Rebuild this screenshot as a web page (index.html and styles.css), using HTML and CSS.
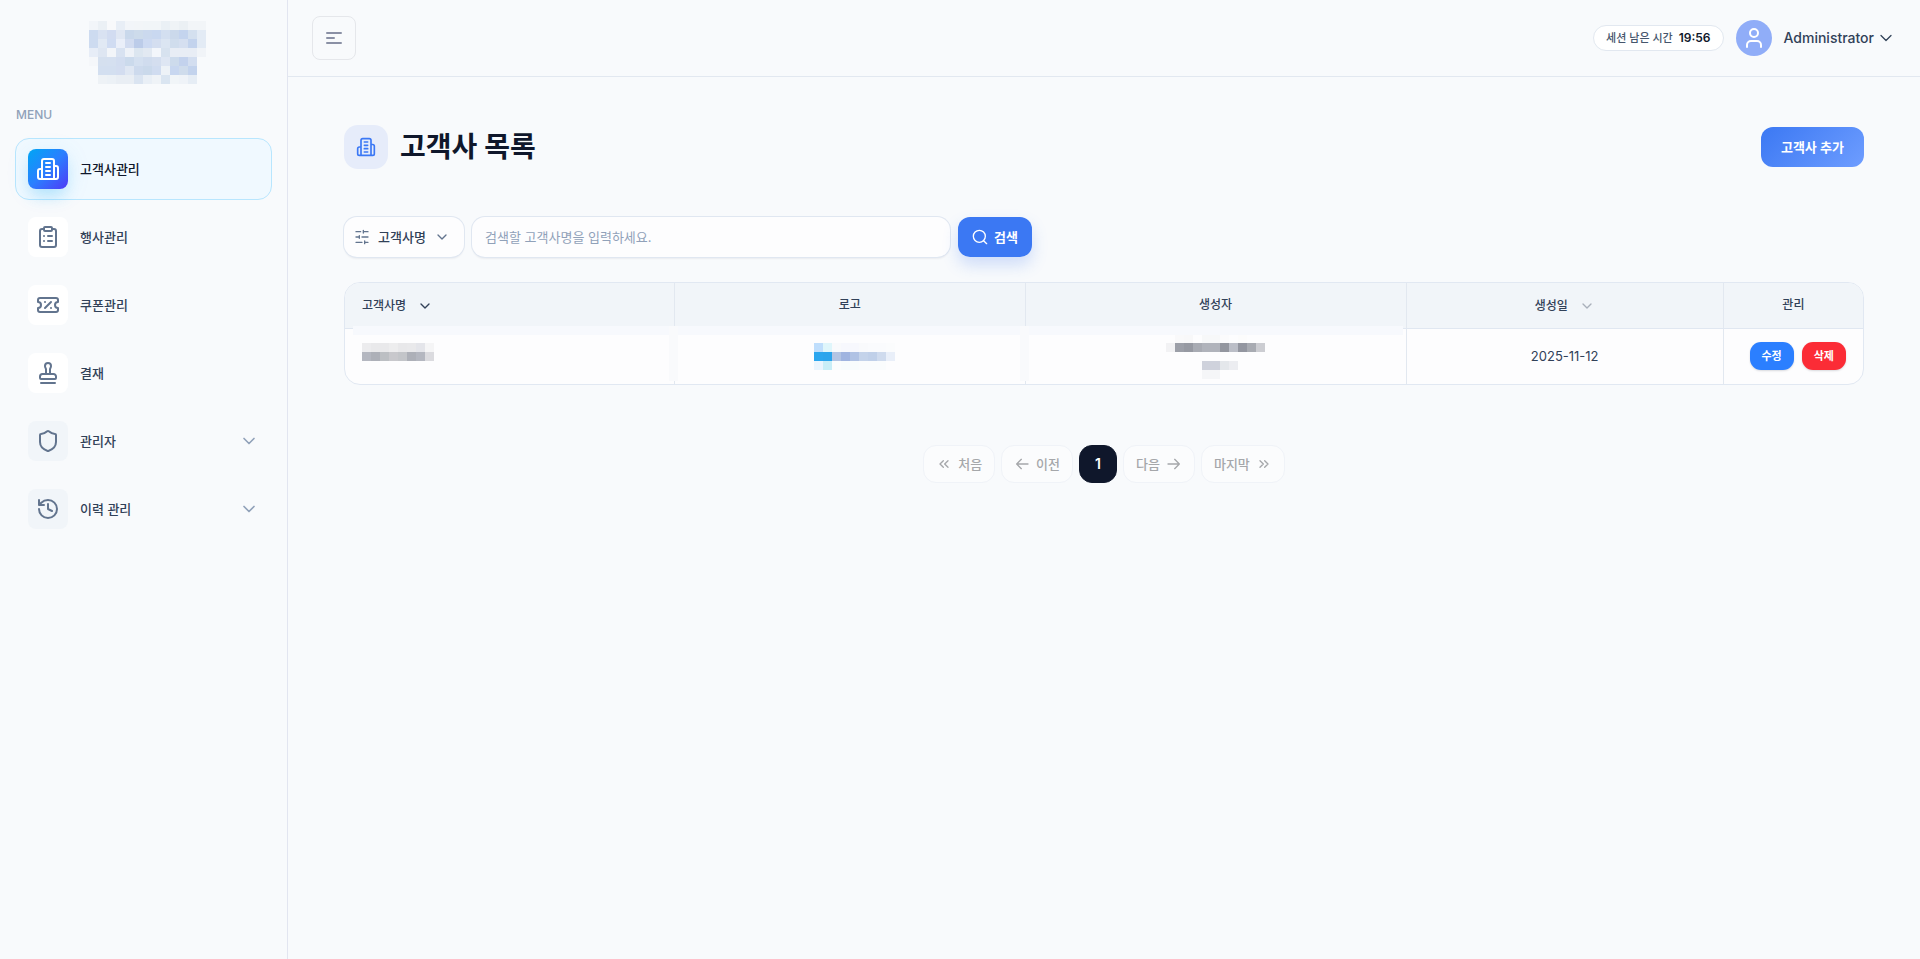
FILE: index.html
```html
<!DOCTYPE html>
<html lang="ko">
  <head>
    <meta charset="UTF-8">
    <meta name="viewport" content="width=device-width, initial-scale=1">
    <title>고객사 목록</title>
    <link rel="stylesheet" href="styles.css">
  </head>
  <body>
    <svg class="sprite" aria-hidden="true">
      <symbol id="building" viewBox="0 0 24 24"><path d="M6 22V4a2 2 0 0 1 2-2h8a2 2 0 0 1 2 2v18Z M6 12H4a2 2 0 0 0-2 2v6a2 2 0 0 0 2 2h2 M18 9h2a2 2 0 0 1 2 2v9a2 2 0 0 1-2 2h-2 M10 6h4 M10 10h4 M10 14h4 M10 18h4"/></symbol>
      <symbol id="chevron" viewBox="0 0 24 24"><path d="m6 9 6 6 6-6"/></symbol>
    </svg>
    <aside class="sidebar">
      <a class="logo" href="#" aria-label="홈"><svg class="mosaic" data-mosaic="logo"></svg></a>
      <h2 class="menu-title">MENU</h2>
      <nav class="menu">
        <a class="menu-item active" href="#">
          <span class="menu-icon"><svg class="icon"><use href="#building"/></svg></span>
          고객사관리
        </a>
        <a class="menu-item" href="#">
          <span class="menu-icon"><svg class="icon" viewBox="0 0 24 24"><rect x="8" y="2" width="8" height="4" rx="1"/><path d="M16 4h2a2 2 0 0 1 2 2v14a2 2 0 0 1-2 2H6a2 2 0 0 1-2-2V6a2 2 0 0 1 2-2h2 M12 11h4 M12 16h4 M8 11h.01 M8 16h.01"/></svg></span>
          행사관리
        </a>
        <a class="menu-item" href="#">
          <span class="menu-icon"><svg class="icon" viewBox="0 0 24 24"><path d="M2 9a3 3 0 1 1 0 6v2a2 2 0 0 0 2 2h16a2 2 0 0 0 2-2v-2a3 3 0 1 1 0-6V7a2 2 0 0 0-2-2H4a2 2 0 0 0-2 2Z M9 9h.01 M15 9l-6 6 M15 15h.01"/></svg></span>
          쿠폰관리
        </a>
        <a class="menu-item" href="#">
          <span class="menu-icon"><svg class="icon" viewBox="0 0 24 24"><path d="M5 22h14 M19.27 13.73A2.5 2.5 0 0 0 17.5 13h-11A2.5 2.5 0 0 0 4 15.500V17a1 1 0 0 0 1 1h14a1 1 0 0 0 1-1v-1.500c0-.66-.26-1.300-.73-1.770Z M14 13V8.500C14 7 15 7 15 5a3 3 0 0 0-3-3c-1.660 0-3 1-3 3s1 2 1 3.500V13"/></svg></span>
          결재
        </a>
        <button class="menu-item group" type="button" aria-expanded="false">
          <span class="menu-icon"><svg class="icon" viewBox="0 0 24 24"><path d="M20 13c0 5-3.500 7.500-7.660 8.950a1 1 0 0 1-.67-.01C7.500 20.500 4 18 4 13V6a1 1 0 0 1 1-1c2 0 4.500-1.200 6.240-2.720a1.170 1.170 0 0 1 1.520 0C14.510 3.810 17 5 19 5a1 1 0 0 1 1 1z"/></svg></span>
          관리자
          <svg class="icon arrow"><use href="#chevron"/></svg>
        </button>
        <button class="menu-item group" type="button" aria-expanded="false">
          <span class="menu-icon"><svg class="icon" viewBox="0 0 24 24"><path d="M3 12a9 9 0 1 0 9-9 9.750 9.750 0 0 0-6.740 2.740L3 8 M3 3v5h5 M12 7v5l4 2"/></svg></span>
          이력 관리
          <svg class="icon arrow"><use href="#chevron"/></svg>
        </button>
      </nav>
    </aside>

    <div class="page">
      <header class="topbar">
        <button class="toggle" type="button" aria-label="메뉴 접기">
          <svg class="toggle-icon" viewBox="0 0 16 12"><path d="M1 1h14M1 6h7M1 11h14"/></svg>
        </button>
        <div class="account">
          <p class="session">세션 남은 시간 <strong>19:56</strong></p>
          <button class="user" type="button">
            <span class="avatar"><svg class="icon" viewBox="0 0 24 24"><path d="M19 21v-2a4 4 0 0 0-4-4H9a4 4 0 0 0-4 4v2"/><circle cx="12" cy="7" r="4"/></svg></span>
            Administrator
            <svg class="icon user-arrow"><use href="#chevron"/></svg>
          </button>
        </div>
      </header>

      <main class="content">
        <div class="heading">
          <span class="heading-icon"><svg class="icon"><use href="#building"/></svg></span>
          <h1>고객사 목록</h1>
          <button class="add" type="button">고객사 추가</button>
        </div>

        <form class="filters" onsubmit="return false">
          <div class="field picker">
            <svg class="icon small" viewBox="0 0 24 24"><path d="M21 4h-7M10 4H3M21 12h-9M8 12H3M21 20h-5M12 20H3M14 2v4M8 10v4M16 18v4"/></svg>
            <select aria-label="검색 조건"><option>고객사명</option></select>
            <svg class="icon small"><use href="#chevron"/></svg>
          </div>
          <input class="field keyword" type="text" aria-label="검색어" placeholder="검색할 고객사명을 입력하세요.">
          <button class="search" type="submit">
            <svg class="icon small" viewBox="0 0 24 24"><circle cx="11" cy="11" r="9"/><path d="m22 22-4.500-4.500"/></svg>
            검색
          </button>
        </form>

        <div class="table-box">
          <table>
            <thead>
              <tr>
                <th class="col-name"><button class="sort" type="button">고객사명 <svg class="icon small"><use href="#chevron"/></svg></button></th>
                <th class="col-logo">로고</th>
                <th class="col-creator">생성자</th>
                <th class="col-date"><button class="sort idle" type="button">생성일 <svg class="icon small"><use href="#chevron"/></svg></button></th>
                <th>관리</th>
              </tr>
            </thead>
            <tbody>
              <tr>
                <td class="masked first"><svg class="mosaic" data-mosaic="name"></svg></td>
                <td class="masked"><svg class="mosaic" data-mosaic="brand"></svg></td>
                <td class="masked last"><svg class="mosaic" data-mosaic="creator"></svg></td>
                <td>2025-11-12</td>
                <td>
                  <div class="actions">
                    <button class="action edit" type="button">수정</button>
                    <button class="action delete" type="button">삭제</button>
                  </div>
                </td>
              </tr>
            </tbody>
          </table>
        </div>

        <nav class="pagination" aria-label="페이지">
          <button type="button" disabled><svg class="icon small" viewBox="0 0 24 24"><path d="m11 17-5-5 5-5M18 17l-5-5 5-5"/></svg>처음</button>
          <button type="button" disabled><svg class="icon small" viewBox="0 0 24 24"><path d="m11 19-7-7 7-7M21 12H4"/></svg>이전</button>
          <button class="current" type="button" aria-current="page">1</button>
          <button type="button" disabled>다음<svg class="icon small" viewBox="0 0 24 24"><path d="m13 19 7-7-7-7M3 12h17"/></svg></button>
          <button type="button" disabled>마지막<svg class="icon small" viewBox="0 0 24 24"><path d="m6 17 5-5-5-5M13 17l5-5-5-5"/></svg></button>
        </nav>
      </main>
    </div>
    <script src="mosaic.js"></script>
  </body>
</html>
```
FILE: styles.css
```css
* {
  box-sizing: border-box;
}
body {
  display: flex;
  min-height: 100vh;
  margin: 0;
  background-color: #f8fafc;
  color: #314158;
  font-family: Inter, "Noto Sans CJK KR", sans-serif;
  font-size: 13px;
  font-weight: 500;
  line-height: 20px;
}
h1, h2, p {
  margin: 0;
}
a {
  color: inherit;
  text-decoration: none;
}
button, input, select {
  margin: 0;
  padding: 0;
  border: 0;
  background: none;
  color: inherit;
  font: inherit;
}
button {
  cursor: pointer;
}
.sprite {
  display: none;
}
.icon {
  flex: none;
  width: 24px;
  height: 24px;
  fill: none;
  stroke: currentColor;
  stroke-width: 2;
  stroke-linecap: round;
  stroke-linejoin: round;
}
.icon.small {
  width: 16px;
  height: 16px;
}
.mosaic {
  display: block;
  shape-rendering: crispEdges;
}

/* sidebar */
.sidebar {
  flex: none;
  width: 288px;
  padding: 21px 15px;
  border-right: 1px solid #e2e5f0;
}
.logo {
  display: flex;
  justify-content: center;
  padding-left: 8px;
}
.menu-title {
  margin: 21px 0 13px 1px;
  color: #90a1b9;
  font-size: 12px;
  font-weight: 500;
}
.menu {
  display: flex;
  flex-direction: column;
  gap: 6px;
}
.menu-item {
  display: flex;
  align-items: center;
  gap: 12px;
  padding: 10px 12px;
  border: 1px solid transparent;
  border-radius: 14px;
  text-align: left;
}
.menu-item.active {
  border-color: #b8e6fe;
  background-color: #f0f9ff;
  color: #0f172b;
}
.menu-icon {
  display: flex;
  align-items: center;
  justify-content: center;
  width: 40px;
  height: 40px;
  border-radius: 8px;
  background-color: #fff;
  color: #62748e;
}
.active .menu-icon {
  background: linear-gradient(135deg, #00a6f4, #2b7fff 50%, #4f39f6);
  box-shadow: 0 10px 15px -3px rgba(0, 166, 244, .2), 0 4px 24px rgba(0, 166, 244, .1);
  color: #fff;
}
.group .menu-icon {
  background-color: #f1f5f9;
}
.arrow {
  width: 20px;
  height: 20px;
  margin-left: auto;
  color: #90a1b9;
}

/* top bar */
.page {
  flex: 1;
  min-width: 0;
}
.topbar {
  display: flex;
  align-items: center;
  justify-content: space-between;
  padding: 16px 24px;
  border-bottom: 1px solid #e2e8f0;
}
.toggle {
  display: flex;
  align-items: center;
  justify-content: center;
  width: 44px;
  height: 44px;
  border: 1px solid #e5e7eb;
  border-radius: 8px;
}
.toggle-icon {
  width: 16px;
  height: 12px;
  fill: none;
  stroke: #8a90a5;
  stroke-width: 2;
  stroke-linecap: round;
}
.account {
  display: flex;
  align-items: center;
  gap: 12px;
}
.session {
  display: flex;
  gap: 6px;
  padding: 2px 12px;
  border: 1px solid #e2e8f0;
  border-radius: 13px;
  background-color: #fff;
  color: #45556c;
  font-size: 11px;
}
.session strong {
  color: #0f172b;
  font-size: 12px;
  font-weight: 600;
}
.user {
  display: flex;
  align-items: center;
  font-size: 14px;
}
.avatar {
  display: flex;
  align-items: center;
  justify-content: center;
  width: 36px;
  height: 36px;
  margin-right: 12px;
  border-radius: 50%;
  background-color: #90adf8;
  color: #fff;
}
.user-arrow {
  width: 20px;
  height: 20px;
  margin-left: 2px;
  stroke-width: 1.5;
}

/* content */
.content {
  padding: 48px 56px;
}
.heading {
  display: flex;
  align-items: center;
  gap: 12px;
}
.heading-icon {
  display: flex;
  align-items: center;
  justify-content: center;
  width: 44px;
  height: 44px;
  border-radius: 14px;
  background-color: #e6ecfa;
  color: #3b78f5;
}
.heading-icon .icon {
  width: 20px;
  height: 20px;
}
h1 {
  color: #0f172b;
  font-size: 28px;
  font-weight: 600;
  line-height: 36px;
}
.add {
  height: 40px;
  margin-left: auto;
  padding: 0 20px;
  border-radius: 12px;
  background: linear-gradient(135deg, #3b78f3, #6e9dff);
  color: #fff;
  font-weight: 600;
}
.filters {
  display: flex;
  gap: 8px;
  margin: 48px 0 25px;
}
.field {
  height: 40px;
  border-radius: 13px;
  background-color: #fdfdfe;
  box-shadow: 0 0 0 1px #e0e7f1, 0 2px 2px rgba(15, 23, 43, .06);
}
.picker {
  display: flex;
  align-items: center;
  gap: 8px;
  padding: 0 14px 0 10px;
  color: #62748e;
}
.picker select {
  width: 48px;
  appearance: none;
  color: #314158;
}
.keyword {
  flex: 0 1 478px;
  min-width: 0;
  padding: 0 13px;
  font-weight: 400;
}
.keyword::placeholder {
  color: #90a1b9;
}
.search {
  display: flex;
  align-items: center;
  gap: 6px;
  height: 40px;
  padding: 0 14px;
  border-radius: 12px;
  background-color: #3b78f3;
  box-shadow: 0 8px 16px rgba(59, 120, 243, .22);
  color: #fff;
  font-weight: 600;
}

/* table */
.table-box {
  overflow: hidden;
  border: 1px solid #e1e8f2;
  border-radius: 16px;
  background-color: #fdfdfe;
}
table {
  width: 100%;
  border-collapse: collapse;
  table-layout: fixed;
}
th, td {
  height: 45px;
  padding: 0 17px;
  border-right: 1px solid #e2e8f0;
  font-weight: 500;
  text-align: center;
}
th {
  border-bottom: 1px solid #e0e7f1;
  background-color: #f1f5f9;
  font-size: 12px;
}
th:last-child, td:last-child {
  border-right: 0;
}
td {
  height: 56px;
  font-weight: 400;
}
td .mosaic {
  margin: 0 auto;
}
th.col-name {
  width: 21.7%;
  text-align: left;
}
.col-logo {
  width: 23.1%;
}
.col-creator {
  width: 25.1%;
}
.col-date {
  width: 20.9%;
}
.sort {
  display: inline-flex;
  align-items: center;
  gap: 11px;
  vertical-align: middle;
}
.idle .icon {
  color: #a9b0bb;
}

/* blurred-out cells hide the rules around them */
.masked {
  position: relative;
}
.masked::before, .masked:not(.last)::after {
  position: absolute;
  top: -3px;
  content: "";
}
.masked::before {
  right: 0;
  left: 0;
  height: 9px;
  background-color: #f7f9fd;
}
.masked.first::before {
  left: 8px;
}
.masked.last::before {
  right: 3px;
}
.masked:not(.last)::after {
  z-index: 1;
  right: -4px;
  bottom: 3px;
  width: 9px;
  background-color: #f9fafc;
}
.masked.first .mosaic {
  margin: 0;
}

.actions {
  display: flex;
  justify-content: flex-end;
  gap: 8px;
}
.action {
  height: 28px;
  padding: 0 12px;
  border-radius: 11px;
  box-shadow: 0 1px 2px rgba(15, 23, 43, .15);
  color: #fff;
  font-size: 11px;
  font-weight: 600;
  white-space: nowrap;
}
.edit {
  background-color: #2b7fff;
}
.delete {
  background-color: #fb2c36;
}

/* pagination */
.pagination {
  display: flex;
  justify-content: center;
  gap: 6px;
  margin-top: 60px;
}
.pagination button {
  display: flex;
  align-items: center;
  justify-content: center;
  gap: 6px;
  min-width: 38px;
  height: 38px;
  padding: 0 12px;
  border: 1px solid #f0f3f8;
  border-radius: 13px;
  background-color: #fbfcfd;
  color: #a5a7aa;
}
.pagination .current {
  border-color: #0f172b;
  background-color: #0f172b;
  color: #fff;
  font-size: 14px;
  font-weight: 600;
}
```
FILE: mosaic.js
```js
// one string per row, "-" leaves the block empty
var mosaics = {
  logo: [
    'f2f5f9 ebf0f5 f8f9fb e8eef6 f2f5f9 f2f5f8 f1f5f8 f1f5f8 eaf0f5 eff3f6 ebf0f4 f2f5f8 f2f5f8',
    'cddbf0 d9e2f2 d2dcf1 e0e7f3 c9d8eb cddbeb cbd9ee c9d8f0 d3dff0 cbd9eb c4d4ee d4e0ef e3ebf5',
    'cddbf0 e1e9f4 d0dcf2 eaeff9 d2dcf0 bccce9 cddaf2 d4def0 dbe5f2 d0dded d5dff0 c3d3ed e3ebf5',
    'e7edf7 dee6f2 f2f5f9 d8e2f1 eef2f8 dce6f0 e2e9f2 f3f6fb d7e2ef e8edf5 e8edf5 e8edf5 f1f4f8',
    'f5f7fa d5e0ef d5e0f0 d2ddf0 cbdaec d4e0f0 d0dcee d4deef dee6f3 cddbec c3d2ed d3def0 -',
    '- d3dff0 d3dff0 d3ddf0 dfe7f3 cddaed cad9eb d0dcf0 edf2f7 c8d7f0 cfdcec c3d3ed -',
    '- eef2f6 ecf1f6 e9eef4 e9eef4 dae4f1 e9eff6 eff3f7 dae5f1 f1f5f8 eff3f8 e6edf5 -'
  ],
  name: [
    'ececee e9e9eb e9e9eb ededee e8e8ea e9e9eb e4e5ea f5f5f6',
    'b4b7c0 adb0b8 bcbfc3 c8c8cc c3c5c9 adb0b8 b4b7c0 dbdbdf',
    '- - - - - - - -'
  ],
  brand: [
    '- bfdefc dff6fb f9fafc f7f8fd f7f8fd f9fafc fafbfd fafbfd fbfcfd',
    '- 2ba6ee 2ba4ec b3c4e3 a0b4e0 b0c2e4 c4d3ea c0d0e9 cfdbee e9eff9',
    '- eaf5fe c8eef7 fbfdfd f8fcfd f8fcfd fafcfd fafcfd fafcfd -'
  ],
  creator: [
    '- f9f9fa f8f8f9 - f7f8f9 f7f8f9 fbfbfc - fcfcfc - -',
    'f2f2f4 9c9fa8 9699a2 a8abb3 b0b3bb b0b3bb 93969f bbbec7 9396a0 a8abb2 cccdd2',
    '- - - - - - - - - - -',
    '- - - - cfd2dc cfd2dc e4e7eb ecedf1 - - -',
    '- - - - f5f6f8 f5f6f8 - - - - -'
  ]
};
var size = 9;

for (const svg of document.querySelectorAll('[data-mosaic]')) {
  const rows = mosaics[svg.dataset.mosaic].map(row => row.split(' '));
  svg.setAttribute('width', rows[0].length * size);
  svg.setAttribute('height', rows.length * size);
  rows.forEach((row, y) => {
    row.forEach((color, x) => {
      if (color === '-') return;
      const rect = document.createElementNS('http://www.w3.org/2000/svg', 'rect');
      rect.setAttribute('x', x * size);
      rect.setAttribute('y', y * size);
      rect.setAttribute('width', size);
      rect.setAttribute('height', size);
      rect.setAttribute('fill', '#' + color);
      svg.append(rect);
    });
  });
}
```
